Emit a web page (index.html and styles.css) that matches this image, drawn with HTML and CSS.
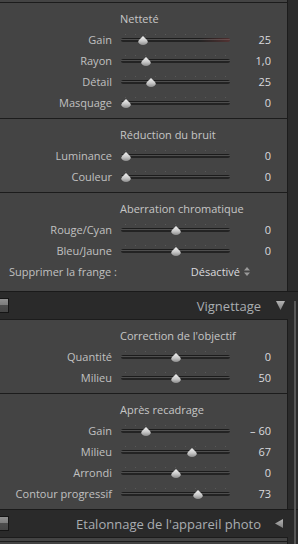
FILE: index.html
```html
<!DOCTYPE html>
<html lang="fr">
<head>
    <meta charset="UTF-8">
    <meta name="viewport" content="width=device-width, initial-scale=1.0">
    <title>Détail</title>
    <link rel="stylesheet" href="styles.css">
</head>
<body>

<div class="panels">
    <div class="group group-tail"></div>

    <!-- Netteté -->
    <section class="group">
        <h2 class="group-title">Netteté</h2>
        <div class="row">
            <span class="label">Gain</span>
            <div class="slider slider-warn"><span class="thumb" style="left:17px"></span></div>
            <span class="value">25</span>
        </div>
        <div class="row">
            <span class="label">Rayon</span>
            <div class="slider"><span class="thumb" style="left:20px"></span></div>
            <span class="value">1,0</span>
        </div>
        <div class="row">
            <span class="label">Détail</span>
            <div class="slider"><span class="thumb" style="left:25px"></span></div>
            <span class="value">25</span>
        </div>
        <div class="row">
            <span class="label">Masquage</span>
            <div class="slider"><span class="thumb" style="left:0px"></span></div>
            <span class="value">0</span>
        </div>
    </section>

    <!-- Réduction du bruit -->
    <section class="group">
        <h2 class="group-title">Réduction du bruit</h2>
        <div class="row">
            <span class="label">Luminance</span>
            <div class="slider"><span class="thumb" style="left:0px"></span></div>
            <span class="value">0</span>
        </div>
        <div class="row">
            <span class="label">Couleur</span>
            <div class="slider"><span class="thumb" style="left:0px"></span></div>
            <span class="value">0</span>
        </div>
    </section>

    <!-- Aberration chromatique -->
    <section class="group">
        <h2 class="group-title">Aberration chromatique</h2>
        <div class="row">
            <span class="label">Rouge/Cyan</span>
            <div class="slider"><span class="thumb" style="left:50px"></span></div>
            <span class="value">0</span>
        </div>
        <div class="row">
            <span class="label">Bleu/Jaune</span>
            <div class="slider"><span class="thumb" style="left:50px"></span></div>
            <span class="value">0</span>
        </div>
        <div class="row-select">
            <span class="label-left">Supprimer la frange :</span>
            <span class="select-value">Désactivé
                <svg class="updown" width="6" height="9" viewBox="0 0 6 9">
                    <path d="M3 0 L6 3.5 L0 3.5 Z M0 5.5 L6 5.5 L3 9 Z" fill="#9a9a9a"/>
                </svg>
            </span>
        </div>
    </section>

    <div class="panel-header">
        <span class="solo-switch"></span>
        <span class="panel-title">Vignettage</span>
        <span class="disclosure disclosure-down"></span>
    </div>

    <!-- Correction de l'objectif -->
    <section class="group">
        <h2 class="group-title">Correction de l'objectif</h2>
        <div class="row">
            <span class="label">Quantité</span>
            <div class="slider"><span class="thumb" style="left:50px"></span></div>
            <span class="value">0</span>
        </div>
        <div class="row">
            <span class="label">Milieu</span>
            <div class="slider"><span class="thumb" style="left:50px"></span></div>
            <span class="value">50</span>
        </div>
    </section>

    <!-- Après recadrage -->
    <section class="group">
        <h2 class="group-title">Après recadrage</h2>
        <div class="row">
            <span class="label">Gain</span>
            <div class="slider"><span class="thumb" style="left:20px"></span></div>
            <span class="value">– 60</span>
        </div>
        <div class="row">
            <span class="label">Milieu</span>
            <div class="slider"><span class="thumb" style="left:66px"></span></div>
            <span class="value">67</span>
        </div>
        <div class="row">
            <span class="label">Arrondi</span>
            <div class="slider"><span class="thumb" style="left:50px"></span></div>
            <span class="value">0</span>
        </div>
        <div class="row">
            <span class="label">Contour progressif</span>
            <div class="slider"><span class="thumb" style="left:72px"></span></div>
            <span class="value">73</span>
        </div>
    </section>

    <div class="panel-header">
        <span class="solo-switch"></span>
        <span class="panel-title">Etalonnage de l'appareil photo</span>
        <span class="disclosure disclosure-left"></span>
    </div>

    <section class="group group-next">
        <div class="group-next-inner"></div>
    </section>

    <div class="scroll-thumb"></div>
</div>

</body>
</html>
```

FILE: styles.css
```css
body {
    margin: 0;
    background-color: #2b2b2b;
    font-family: "Open Sans", "Noto Sans", sans-serif;
    font-size: 11px;
}

.panels {
    position: relative;
    width: 298px;
    height: 544px;
    overflow: hidden;
}

/* sub-section boxes */
.group {
    background-color: #444;
    border-top: 1px solid #1c1c1c;
    border-right: 1px solid #1c1c1c;
    margin-right: 10px;
    padding: 5px 0;
}

.group-tail {
    height: 2px;
    padding: 0;
    border-top: none;
}

.group-title {
    margin: 0;
    height: 21px;
    line-height: 21px;
    padding-left: 120px;
    font-size: 11px;
    font-weight: normal;
    color: #c6c6c6;
}

.row {
    display: grid;
    grid-template-columns: 112px 109px 32px;
    column-gap: 9px;
    align-items: center;
    height: 21px;
}

.label {
    text-align: right;
    white-space: nowrap;
    color: #c0c0c0;
}

.value {
    text-align: right;
    white-space: nowrap;
    color: #dadade;
}

/* slider: ticks, groove, thumb */
.slider {
    position: relative;
    height: 21px;
}

.slider::before {
    content: "";
    position: absolute;
    left: 4px;
    top: 5px;
    width: 101px;
    height: 1px;
    background: repeating-linear-gradient(to right, #585858 0 1px, transparent 1px 10px);
}

.slider::after {
    content: "";
    position: absolute;
    left: 0;
    right: 0;
    top: 9px;
    height: 4px;
    border-radius: 2px;
    background: linear-gradient(#1c1c1c 0 25%, #4e4e4e 25% 60%, #232323 60%);
}

.slider-warn::after {
    background:
        linear-gradient(to right, transparent 72%, rgba(140, 70, 70, 0.45)),
        linear-gradient(#1c1c1c 0 25%, #4e4e4e 25% 60%, #232323 60%);
}

.thumb {
    position: absolute;
    top: 7px;
    width: 10px;
    height: 9px;
    z-index: 1;
    background: linear-gradient(#f4f4f4, #c8c8c8 55%, #8c8c8c);
    clip-path: polygon(50% 0, 90% 45%, 100% 65%, 100% 100%, 0 100%, 0 65%, 10% 45%);
    border-radius: 0 0 5px 5px / 0 0 4px 4px;
}

/* popup row */
.row-select {
    display: flex;
    align-items: center;
    height: 21px;
    padding-left: 9px;
    margin-bottom: 4px;
}

.label-left {
    color: #c0c0c0;
}

.select-value {
    display: flex;
    align-items: center;
    gap: 4px;
    margin-left: auto;
    margin-right: 37px;
    color: #dadade;
}

/* panel header bars */
.panel-header {
    display: flex;
    align-items: center;
    height: 27px;
    border-top: 1px solid #1a1a1a;
    background-color: #2a2a2a;
}

.solo-switch {
    width: 8px;
    height: 13px;
    margin-left: -1px;
    border: 1px solid #151515;
    background: linear-gradient(#909090, #7a7a7a 50%, #4c4c4c 50%, #454545);
}

.panel-title {
    margin-left: auto;
    font-size: 13px;
    color: #a9adb1;
}

.disclosure {
    background: linear-gradient(#b4b4b4, #7e7e7e);
}

.disclosure-down {
    width: 9px;
    height: 9px;
    margin: 0 13px 0 15px;
    clip-path: polygon(0 0, 100% 0, 50% 100%);
}

.disclosure-left {
    width: 8px;
    height: 9px;
    margin: 0 15px 0 14px;
    clip-path: polygon(100% 0, 100% 100%, 0 50%);
}

.group-next {
    padding: 3px 0 0;
}

.group-next-inner {
    height: 10px;
    border-top: 1px solid #1c1c1c;
}

.scroll-thumb {
    position: absolute;
    left: 294px;
    top: 301px;
    bottom: 0;
    width: 2px;
    background-color: #575757;
}
```
